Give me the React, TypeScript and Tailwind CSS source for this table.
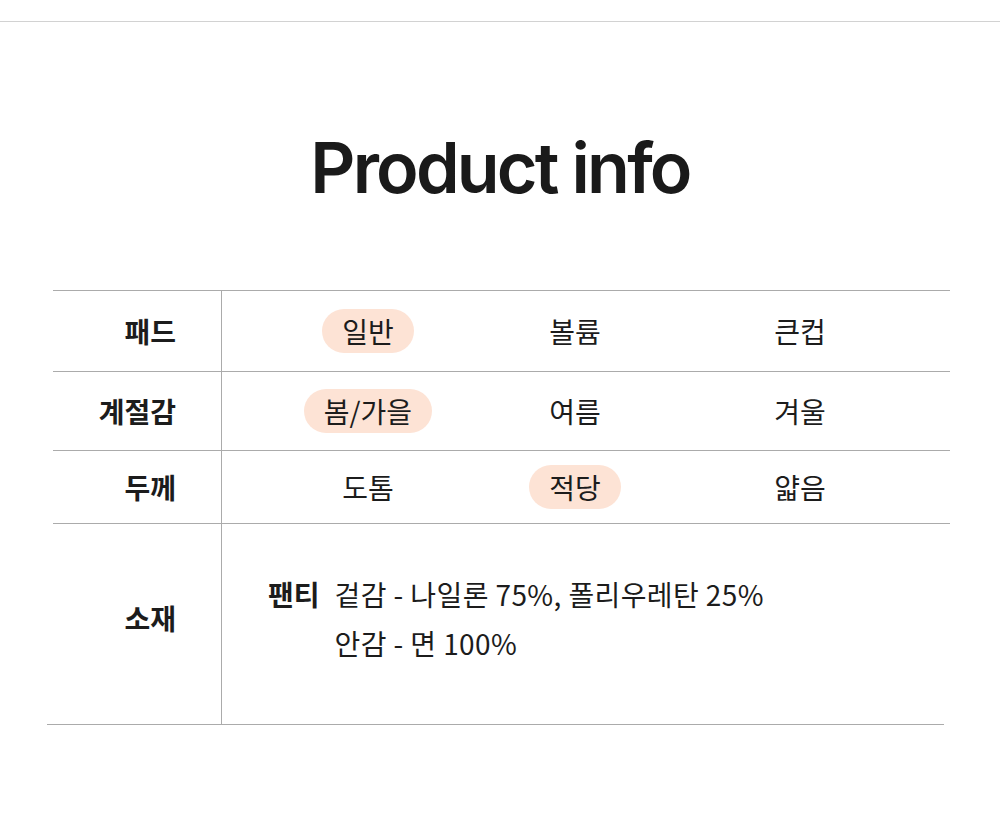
import React from "react";

const kr = { fontFamily: '"Noto Sans CJK KR", "Noto Sans", sans-serif' };

const Pill = ({ text, on }: { text: string; on?: boolean }) => (
  <span
    className={
      "inline-flex items-center justify-center h-[44px] px-[20px] rounded-full " +
      (on ? "bg-[#fde3d5]" : "")
    }
  >
    {text}
  </span>
);

const rows = [
  { label: "패드", values: ["일반", "볼륨", "큰컵"], on: 0, h: "h-[81px]" },
  { label: "계절감", values: ["봄/가을", "여름", "겨울"], on: 0, h: "h-[79px]" },
  { label: "두께", values: ["도톰", "적당", "얇음"], on: 1, h: "h-[73px]" },
];

export default function App() {
  return (
    <div className="w-[1000px] min-h-[823px] bg-white text-[#1c1c1c]" style={kr}>
      <div className="pt-[21px]">
        <div className="h-px bg-[#d2d2d2]" />
      </div>
      <h1
        className="mt-[111px] text-center text-[70px] leading-none font-semibold tracking-[-2.8px] text-[#1a1a1a]"
        style={{ fontFamily: 'Inter, "Noto Sans", sans-serif' }}
      >
        Product info
      </h1>
      <div className="mt-[87px] ml-[53px] w-[897px] border-t border-[#ababab]">
        {rows.map((r) => (
          <div key={r.label} className={"flex border-b border-[#ababab] " + r.h}>
            <div className="w-[169px] shrink-0 flex items-center justify-end pr-[45px] text-[28px] font-bold border-r border-[#ababab]">
              {r.label}
            </div>
            <div className="flex items-center pl-[40px] text-[28px]">
              <div className="w-[212px] flex justify-center">
                <Pill text={r.values[0]} on={r.on === 0} />
              </div>
              <div className="w-[202px] flex justify-center">
                <Pill text={r.values[1]} on={r.on === 1} />
              </div>
              <div className="w-[248px] flex justify-center">
                <Pill text={r.values[2]} on={r.on === 2} />
              </div>
            </div>
          </div>
        ))}
        <div className="flex h-[200px]">
          <div className="w-[169px] shrink-0 flex items-center justify-end pr-[45px] pb-[12px] text-[28px] font-bold border-r border-[#ababab]">
            소재
          </div>
          <div className="flex items-center pl-[46px] pb-[10px] text-[28px]">
            <div className="flex gap-[15px] leading-[49px]">
              <span className="font-bold">팬티</span>
              <div className="flex flex-col tracking-[0.4px]">
                <span>겉감 - 나일론 75%, 폴리우레탄 25%</span>
                <span>안감 - 면 100%</span>
              </div>
            </div>
          </div>
        </div>
      </div>
      <div className="ml-[47px] w-[897px] h-px bg-[#ababab]" />
    </div>
  );
}
